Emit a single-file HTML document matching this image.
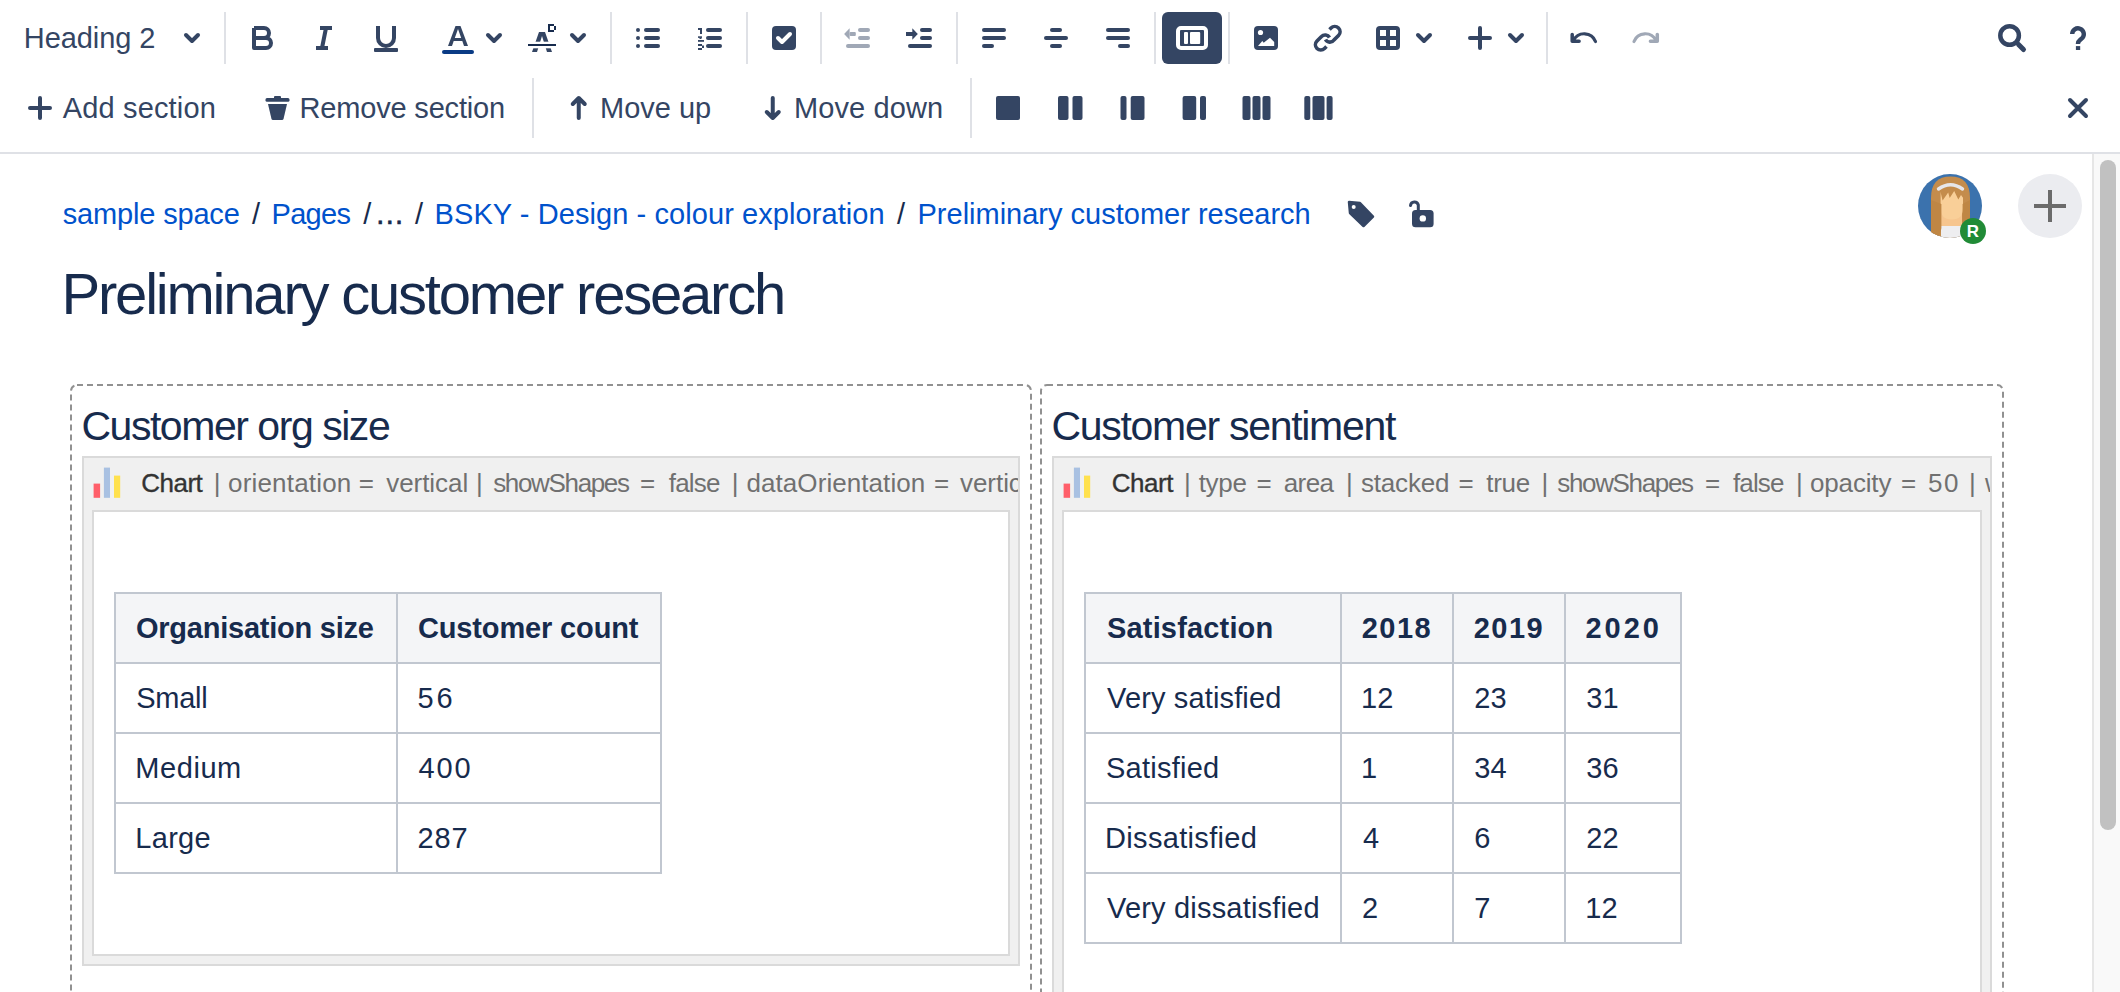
<!DOCTYPE html>
<html><head><meta charset="utf-8">
<style>
html,body{margin:0;padding:0;}
body{width:2120px;height:992px;overflow:hidden;background:#fff;position:relative;font-family:"Liberation Sans",sans-serif;}
.t{position:absolute;white-space:nowrap;line-height:0;}
.bx{position:absolute;}
svg{position:absolute;left:0;top:0;}
</style></head>
<body>
<svg width="2120" height="160" viewBox="0 0 2120 160">
  <!-- dividers -->
  <g fill="#DFE1E6">
    <rect x="224" y="12" width="2" height="52"/>
    <rect x="610" y="12" width="2" height="52"/>
    <rect x="746" y="12" width="2" height="52"/>
    <rect x="820" y="12" width="2" height="52"/>
    <rect x="956" y="12" width="2" height="52"/>
    <rect x="1154" y="12" width="2" height="52"/>
    <rect x="1228" y="12" width="2" height="52"/>
    <rect x="1546" y="12" width="2" height="52"/>
    <rect x="532" y="78" width="2" height="60"/>
    <rect x="970" y="78" width="2" height="60"/>
  </g>
  <rect x="0" y="152" width="2120" height="2" fill="#DFE1E6"/>
  <g stroke="#344563" fill="none" stroke-width="4" stroke-linecap="round" stroke-linejoin="round">
    <!-- chevrons -->
    <path d="M186,35 L192,41 L198,35"/>
    <path d="M488,35 L494,41 L500,35"/>
    <path d="M572,35 L578,41 L584,35"/>
    <path d="M1418,35 L1424,41 L1430,35"/>
    <path d="M1510,35 L1516,41 L1522,35"/>
    <!-- plus -->
    <path d="M1470,38 H1490 M1480,28 V48"/>
    <path d="M30,108 H50 M40,98 V118"/>
    <!-- arrows -->
    <path d="M572.75,104 L578.75,98 L584.75,104 M578.75,98 V118"/>
    <path d="M766.75,112 L772.75,118 L778.75,112 M772.75,118 V98"/>
    <!-- close -->
    <path d="M2070,100 L2086,116 M2086,100 L2070,116"/>
    <!-- B -->
    <path d="M254,28 V48 H266 A5,5 0 0 0 266,38 H254 M254,28 H264 A5,5 0 0 1 264,38" stroke-linecap="butt"/>
    <!-- I -->
    <path d="M320,28 H332 M316,48 H328 M326,28 L322,48" stroke-linecap="butt"/>
    <!-- U -->
    <path d="M378,26 V38 A8,8 0 0 0 394,38 V26" stroke-linecap="butt"/>
  </g>
  <rect x="374" y="48" width="24" height="4" rx="1" fill="#344563"/>
  <!-- A text colour -->
  <path d="M448,46 L455.5,26 H460.5 L468,46 H464 L462.3,41 H453.7 L452,46 Z M454.8,38 H461.2 L458,29 Z" fill="#344563" fill-rule="evenodd"/>
  <path d="M444,52 H472" stroke="#0A3B85" stroke-width="4" stroke-linecap="round"/>
  <!-- strike A -->
  <path d="M532,52 L539,32 H545 L552,52 H547 L542,36 L537,52 Z" fill="#344563"/>
  <rect x="529" y="41.7" width="26" height="6.6" fill="#fff"/>
  <rect x="528" y="44" width="28" height="2" fill="#172B4D"/>
  <path d="M548,24 H554 V26 H556 V30 H554 V32 H548 Z M550,26 V30 H554 V26 Z" fill="#172B4D" fill-rule="evenodd"/>
  <!-- bullet list -->
  <g fill="#344563">
    <circle cx="638" cy="30" r="2"/><circle cx="638" cy="38" r="2"/><circle cx="638" cy="46" r="2"/>
    <rect x="644" y="28" width="16" height="4" rx="2"/><rect x="644" y="36" width="16" height="4" rx="2"/><rect x="644" y="44" width="16" height="4" rx="2"/>
    <!-- numbered -->
    <rect x="706" y="28" width="16" height="4" rx="2"/><rect x="706" y="36" width="16" height="4" rx="2"/><rect x="706" y="44" width="16" height="4" rx="2"/>
    <rect x="698" y="28" width="3" height="2"/><rect x="700" y="28" width="2" height="6"/>
    <rect x="698" y="36.3" width="4" height="1.6"/><rect x="699.5" y="37.5" width="2" height="1.5"/><rect x="698" y="40" width="6" height="1.8"/>
    <rect x="698" y="44" width="4" height="2"/><rect x="702" y="45.5" width="2" height="2.5"/><rect x="698" y="48" width="4" height="2"/>
    <!-- checkbox -->
    <rect x="772" y="26" width="24" height="24" rx="4"/>
    <!-- indent -->
    <rect x="906" y="32" width="7" height="4"/>
    <path d="M912.3,28.3 L917.8,34 L912.3,39.7 Z"/>
    <rect x="920" y="28" width="12" height="4" rx="2"/><rect x="920" y="36" width="12" height="4" rx="2"/><rect x="908" y="44" width="24" height="4" rx="2"/>
    <!-- align -->
    <rect x="982" y="28" width="24" height="4" rx="2"/><rect x="982" y="36" width="24" height="4" rx="2"/><rect x="982" y="44" width="12" height="4" rx="2"/>
    <rect x="1050" y="28" width="12" height="4" rx="2"/><rect x="1044" y="36" width="24" height="4" rx="2"/><rect x="1050" y="44" width="12" height="4" rx="2"/>
    <rect x="1106" y="28" width="24" height="4" rx="2"/><rect x="1106" y="36" width="24" height="4" rx="2"/><rect x="1118" y="44" width="12" height="4" rx="2"/>
    <!-- active -->
    <rect x="1162" y="12" width="60" height="52" rx="6"/>
    <!-- image -->
    <rect x="1254" y="26" width="24" height="24" rx="4"/>
    <!-- table -->
    <rect x="1376" y="26" width="24" height="24" rx="4"/>
    <!-- trash -->
    <rect x="274" y="96" width="7" height="4" rx="1"/>
    <rect x="265.5" y="98" width="24" height="3.7" rx="1.5"/>
    <path d="M268,104 H287 L283.5,119 Q283.2,120 282,120 H273 Q271.8,120 271.5,119 Z"/>
    <!-- layouts -->
    <rect x="996" y="96" width="24" height="24" rx="2"/>
    <rect x="1058" y="96" width="10.5" height="24" rx="2"/><rect x="1072.5" y="96" width="10" height="24" rx="2"/>
    <rect x="1120.5" y="96" width="6" height="24" rx="2"/><rect x="1130.7" y="96" width="13.8" height="24" rx="2"/>
    <rect x="1182.6" y="96" width="13.6" height="24" rx="2"/><rect x="1200" y="96" width="6" height="24" rx="2"/>
    <rect x="1242.5" y="96" width="8" height="24" rx="2"/><rect x="1252.5" y="96" width="8" height="24" rx="2"/><rect x="1262.5" y="96" width="8" height="24" rx="2"/>
    <rect x="1304.3" y="96" width="6" height="24" rx="2"/><rect x="1312.5" y="96" width="12" height="24" rx="2"/><rect x="1326.6" y="96" width="6" height="24" rx="2"/>
  </g>
  <!-- outdent grey -->
  <g fill="#A0A8B6">
    <rect x="849.6" y="32" width="6.2" height="4" rx="1"/>
    <path d="M849.6,28.3 L844.1,34 L849.6,39.7 Z"/>
    <rect x="858" y="28" width="12" height="4" rx="2"/><rect x="858" y="36" width="12" height="4" rx="2"/><rect x="846" y="44" width="24" height="4" rx="2"/>
  </g>
  <!-- checkbox tick -->
  <path d="M778,38 L782,42 L790,34" stroke="#fff" stroke-width="4" fill="none" stroke-linecap="round" stroke-linejoin="round"/>
  <!-- active inner icon -->
  <rect x="1178" y="28" width="28" height="20" rx="3" fill="none" stroke="#fff" stroke-width="4"/>
  <rect x="1184" y="32" width="4" height="12" rx="1" fill="#fff"/>
  <rect x="1190" y="32" width="10.2" height="12" rx="1" fill="#fff"/>
  <!-- image inner -->
  <circle cx="1260.5" cy="32.5" r="2.6" fill="#fff"/>
  <path d="M1258,46.1 L1262.3,40.9 L1263.7,42.8 L1270,37.8 L1274.2,42 V46.1 Z" fill="#fff"/>
  <!-- table inner -->
  <g fill="#fff"><rect x="1380" y="30" width="6" height="6"/><rect x="1390" y="30" width="6" height="6"/><rect x="1380" y="40" width="6" height="6"/><rect x="1390" y="40" width="6" height="6"/></g>
  <!-- link -->
  <g stroke="#344563" stroke-width="3.6" fill="none" stroke-linecap="butt">
    <path d="M1326.5,46.5 L1324.5,48.5 A5,5 0 0 1 1317,41 L1321.5,36.5 A5,5 0 0 1 1329.5,37.5"/>
    <path d="M1329.5,29.5 L1331,28 A5,5 0 0 1 1338.5,35.5 L1334,40 A5,5 0 0 1 1325.5,39.5"/>
  </g>
  <!-- undo / redo -->
  <path d="M1572.2,34.6 V41.3 H1579.1" stroke="#344563" stroke-width="3.5" fill="none" stroke-linecap="round" stroke-linejoin="round"/>
  <path d="M1573.5,40.5 A12,12 0 0 1 1595.5,41.5" stroke="#344563" stroke-width="3.2" fill="none" stroke-linecap="round"/>
  <g transform="translate(3229.5,0) scale(-1,1)">
    <path d="M1572.2,34.6 V41.3 H1579.1" stroke="#A0A8B6" stroke-width="3.5" fill="none" stroke-linecap="round" stroke-linejoin="round"/>
    <path d="M1573.5,40.5 A12,12 0 0 1 1595.5,41.5" stroke="#A0A8B6" stroke-width="3.2" fill="none" stroke-linecap="round"/>
  </g>
  <!-- search -->
  <circle cx="2009.6" cy="35.5" r="9.3" stroke="#344563" stroke-width="4.5" fill="none"/>
  <path d="M2018.5,44.5 L2023.5,49.5" stroke="#344563" stroke-width="5" stroke-linecap="round"/>
  <!-- help -->
  <path d="M2072.2,34 A5.8,5.8 0 1 1 2082.5,37.8 L2080,40 Q2078,41.6 2078,43.5 V44" stroke="#344563" stroke-width="4.4" fill="none"/>
  <rect x="2075.9" y="46.1" width="4.3" height="3.9" fill="#344563"/>
</svg>

<div class="bx" style="left:2092px;top:154px;width:28px;height:838px;background:#F9F9F9;border-left:2px solid #E6E6E6;box-sizing:border-box;"></div>
<div class="bx" style="left:2100px;top:160px;width:16px;height:670px;background:#C1C1C1;border-radius:8px;"></div>
<svg width="2120" height="260" viewBox="0 0 2120 260" style="top:0">
  <path d="M1349,202 L1360,203 L1373,216.5 L1363.5,226 L1350,213 Z" fill="#344563" stroke="#344563" stroke-width="2.5" stroke-linejoin="round"/>
  <circle cx="1353.7" cy="207" r="2" fill="#fff"/>
  <rect x="1412" y="210" width="21.6" height="17.3" rx="3.5" fill="#344563"/>
  <circle cx="1422.8" cy="218.4" r="3.2" fill="#fff"/>
  <path d="M1410.5,205.5 A4,4 0 0 1 1418.3,205 V211" stroke="#344563" stroke-width="3" fill="none" stroke-linecap="round"/>
  <!-- add circle -->
  <circle cx="2050" cy="206" r="32" fill="#EBECF0"/>
  <rect x="2048" y="190" width="4" height="32" fill="#6B6B6B"/>
  <rect x="2034" y="204" width="32" height="4" fill="#6B6B6B"/>
  <!-- avatar -->
  <defs><clipPath id="av"><circle cx="1950" cy="206" r="32"/></clipPath></defs>
  <circle cx="1950" cy="206" r="32" fill="#3B72AD"/>
  <g clip-path="url(#av)">
    <path d="M1931,240 V198 Q1931,176.5 1950.5,176.5 Q1970,176.5 1970,198 V240 Z" fill="#C48C4C"/>
    <rect x="1941" y="224" width="20" height="20" fill="#EEEEF0"/>
    <rect x="1941" y="212" width="21" height="14" fill="#F6C58E"/>
    <path d="M1940.6,190 H1963 V208 Q1963,219.5 1951.8,219.5 Q1940.6,219.5 1940.6,208 Z" fill="#F9CF98"/>
    <path d="M1938,187 L1941,194 L1942.6,200.5 L1948.2,192.5 L1949.7,198 L1954.2,191 L1958.3,199.5 L1961,195 L1963.2,198 L1966,187 Z" fill="#C48C4C"/>
    <path d="M1931,200 L1941.4,204 L1941.4,225 Q1942,232 1938,236 L1931,236 Z" fill="#BF8644"/>
    <path d="M1970,200 L1962.6,204 L1962.6,225 Q1963,230 1966,233 L1970,233 Z" fill="#BF8644"/>
    <path d="M1938.5,189 Q1950.5,180.5 1962.5,189" stroke="#E6E6EA" stroke-width="3.4" fill="none" stroke-linecap="round"/>
  </g>
  <circle cx="1973" cy="231" r="13" fill="#218B37"/>
</svg>

<div class="t" style="left:1963px;top:232px;width:20px;text-align:center;color:#fff;font-size:17px;font-weight:bold;">R</div>
<svg width="2120" height="992" viewBox="0 0 2120 992" style="top:0">
  <rect x="71" y="385" width="960" height="700" rx="6" fill="none" stroke="#919191" stroke-width="2" stroke-dasharray="6 4"/>
  <rect x="1041" y="385" width="962" height="700" rx="6" fill="none" stroke="#919191" stroke-width="2" stroke-dasharray="6 4"/>
</svg>
<div class="bx" style="left:82px;top:456px;width:938px;height:510px;background:#F0F0F0;border:2px solid #DADADA;box-sizing:border-box;"></div>
<div class="bx" style="left:92px;top:510px;width:918px;height:446px;background:#fff;border:2px solid #DADADA;box-sizing:border-box;"></div>
<div class="bx" style="left:1052px;top:456px;width:940px;height:600px;background:#F0F0F0;border:2px solid #DADADA;box-sizing:border-box;"></div>
<div class="bx" style="left:1062px;top:510px;width:920px;height:600px;background:#fff;border:2px solid #DADADA;box-sizing:border-box;"></div>
<svg width="40" height="40" style="left:91px;top:465px;"><rect x="2.6" y="18.6" width="6.5" height="14.2" fill="#FF5F6A"/><rect x="12.9" y="2.6" width="6.1" height="30.2" fill="#A9C1E2"/><rect x="23" y="10.6" width="6.2" height="22.2" fill="#FFE14E"/></svg>
<svg width="40" height="40" style="left:1061px;top:465px;"><rect x="2.6" y="18.6" width="6.5" height="14.2" fill="#FF5F6A"/><rect x="12.9" y="2.6" width="6.1" height="30.2" fill="#A9C1E2"/><rect x="23" y="10.6" width="6.2" height="22.2" fill="#FFE14E"/></svg>
<div class="bx" style="left:84px;top:458px;width:934px;height:52px;overflow:hidden;">
<div class="t" style="left:57.30px;top:25px;font-size:26px;color:#333333;letter-spacing:-0.514px;-webkit-text-stroke:0.35px #333;">Chart</div>
<div class="t" style="left:129.80px;top:25px;font-size:26px;color:#707070;">|</div>
<div class="t" style="left:144.00px;top:25px;font-size:26px;color:#707070;letter-spacing:0.184px;">orientation</div>
<div class="t" style="left:274.80px;top:25px;font-size:26px;color:#707070;">=</div>
<div class="t" style="left:302.20px;top:25px;font-size:26px;color:#707070;letter-spacing:-0.054px;">vertical</div>
<div class="t" style="left:392.00px;top:25px;font-size:26px;color:#707070;">|</div>
<div class="t" style="left:409.20px;top:25px;font-size:26px;color:#707070;letter-spacing:-1.342px;">showShapes</div>
<div class="t" style="left:556.00px;top:25px;font-size:26px;color:#707070;">=</div>
<div class="t" style="left:584.75px;top:25px;font-size:26px;color:#707070;letter-spacing:-0.802px;">false</div>
<div class="t" style="left:647.75px;top:25px;font-size:26px;color:#707070;">|</div>
<div class="t" style="left:662.50px;top:25px;font-size:26px;color:#707070;letter-spacing:0.066px;">dataOrientation</div>
<div class="t" style="left:850.00px;top:25px;font-size:26px;color:#707070;">=</div>
<div class="t" style="left:876.00px;top:25px;font-size:26px;color:#707070;letter-spacing:-0.054px;">vertical</div>
</div>
<div class="bx" style="left:1054px;top:458px;width:936px;height:52px;overflow:hidden;">
<div class="t" style="left:57.70px;top:25px;font-size:26px;color:#333333;letter-spacing:-0.439px;-webkit-text-stroke:0.35px #333;">Chart</div>
<div class="t" style="left:130.00px;top:25px;font-size:26px;color:#707070;">|</div>
<div class="t" style="left:144.70px;top:25px;font-size:26px;color:#707070;letter-spacing:-0.295px;">type</div>
<div class="t" style="left:202.50px;top:25px;font-size:26px;color:#707070;">=</div>
<div class="t" style="left:229.70px;top:25px;font-size:26px;color:#707070;letter-spacing:-0.559px;">area</div>
<div class="t" style="left:292.00px;top:25px;font-size:26px;color:#707070;">|</div>
<div class="t" style="left:307.00px;top:25px;font-size:26px;color:#707070;letter-spacing:-0.191px;">stacked</div>
<div class="t" style="left:404.40px;top:25px;font-size:26px;color:#707070;">=</div>
<div class="t" style="left:432.30px;top:25px;font-size:26px;color:#707070;letter-spacing:-0.281px;">true</div>
<div class="t" style="left:487.60px;top:25px;font-size:26px;color:#707070;">|</div>
<div class="t" style="left:503.30px;top:25px;font-size:26px;color:#707070;letter-spacing:-1.353px;">showShapes</div>
<div class="t" style="left:650.90px;top:25px;font-size:26px;color:#707070;">=</div>
<div class="t" style="left:679.00px;top:25px;font-size:26px;color:#707070;letter-spacing:-0.865px;">false</div>
<div class="t" style="left:742.00px;top:25px;font-size:26px;color:#707070;">|</div>
<div class="t" style="left:756.00px;top:25px;font-size:26px;color:#707070;letter-spacing:-0.163px;">opacity</div>
<div class="t" style="left:846.90px;top:25px;font-size:26px;color:#707070;">=</div>
<div class="t" style="left:874.00px;top:25px;font-size:26px;color:#707070;letter-spacing:1.540px;">50</div>
<div class="t" style="left:915.00px;top:25px;font-size:26px;color:#707070;">|</div>
<div class="t" style="left:931.00px;top:25px;font-size:26px;color:#707070;">width</div>
</div>
<div class="bx" style="left:116px;top:594px;width:544px;height:68px;background:#F4F5F7"></div><div class="bx" style="left:114px;top:592px;width:548px;height:2px;background:#C1C7D0"></div><div class="bx" style="left:114px;top:662px;width:548px;height:2px;background:#C1C7D0"></div><div class="bx" style="left:114px;top:732px;width:548px;height:2px;background:#C1C7D0"></div><div class="bx" style="left:114px;top:802px;width:548px;height:2px;background:#C1C7D0"></div><div class="bx" style="left:114px;top:872px;width:548px;height:2px;background:#C1C7D0"></div><div class="bx" style="left:114px;top:592px;width:2px;height:282px;background:#C1C7D0"></div><div class="bx" style="left:396px;top:592px;width:2px;height:282px;background:#C1C7D0"></div><div class="bx" style="left:660px;top:592px;width:2px;height:282px;background:#C1C7D0"></div><div class="bx" style="left:1086px;top:594px;width:594px;height:68px;background:#F4F5F7"></div><div class="bx" style="left:1084px;top:592px;width:598px;height:2px;background:#C1C7D0"></div><div class="bx" style="left:1084px;top:662px;width:598px;height:2px;background:#C1C7D0"></div><div class="bx" style="left:1084px;top:732px;width:598px;height:2px;background:#C1C7D0"></div><div class="bx" style="left:1084px;top:802px;width:598px;height:2px;background:#C1C7D0"></div><div class="bx" style="left:1084px;top:872px;width:598px;height:2px;background:#C1C7D0"></div><div class="bx" style="left:1084px;top:942px;width:598px;height:2px;background:#C1C7D0"></div><div class="bx" style="left:1084px;top:592px;width:2px;height:352px;background:#C1C7D0"></div><div class="bx" style="left:1340px;top:592px;width:2px;height:352px;background:#C1C7D0"></div><div class="bx" style="left:1452px;top:592px;width:2px;height:352px;background:#C1C7D0"></div><div class="bx" style="left:1564px;top:592px;width:2px;height:352px;background:#C1C7D0"></div><div class="bx" style="left:1680px;top:592px;width:2px;height:352px;background:#C1C7D0"></div>
<div class="t" style="left:23.80px;top:38px;font-size:29px;color:#344563;letter-spacing:-0.086px;">Heading 2</div>
<div class="t" style="left:62.80px;top:108px;font-size:29px;color:#344563;letter-spacing:0.149px;">Add section</div>
<div class="t" style="left:299.50px;top:108px;font-size:29px;color:#344563;letter-spacing:-0.177px;">Remove section</div>
<div class="t" style="left:600.00px;top:108px;font-size:29px;color:#344563;letter-spacing:-0.017px;">Move up</div>
<div class="t" style="left:794.00px;top:108px;font-size:29px;color:#344563;letter-spacing:0.104px;">Move down</div>
<div class="t" style="left:62.80px;top:214px;font-size:29px;color:#0052CC;letter-spacing:-0.173px;">sample space</div>
<div class="t" style="left:251.90px;top:214px;font-size:29px;color:#172B4D;">/</div>
<div class="t" style="left:271.60px;top:214px;font-size:29px;color:#0052CC;letter-spacing:-0.732px;">Pages</div>
<div class="t" style="left:363.20px;top:214px;font-size:29px;color:#172B4D;">/</div>
<div class="t" style="left:376.30px;top:214px;font-size:29px;color:#172B4D;letter-spacing:1.293px;-webkit-text-stroke:0.6px #172B4D;">...</div>
<div class="t" style="left:415.00px;top:214px;font-size:29px;color:#172B4D;">/</div>
<div class="t" style="left:434.60px;top:214px;font-size:29px;color:#0052CC;letter-spacing:0.074px;">BSKY - Design - colour exploration</div>
<div class="t" style="left:897.00px;top:214px;font-size:29px;color:#172B4D;">/</div>
<div class="t" style="left:917.50px;top:214px;font-size:29px;color:#0052CC;">Preliminary customer research</div>
<div class="t" style="left:61.50px;top:294px;font-size:58px;color:#172B4D;letter-spacing:-2.204px;">Preliminary customer research</div>
<div class="t" style="left:81.40px;top:426px;font-size:41px;color:#172B4D;letter-spacing:-1.460px;">Customer org size</div>
<div class="t" style="left:1051.40px;top:426px;font-size:41px;color:#172B4D;letter-spacing:-1.286px;">Customer sentiment</div>
<div class="t" style="left:136.00px;top:628px;font-size:29px;font-weight:bold;color:#172B4D;letter-spacing:-0.244px;">Organisation size</div>
<div class="t" style="left:418.00px;top:628px;font-size:29px;font-weight:bold;color:#172B4D;letter-spacing:-0.145px;">Customer count</div>
<div class="t" style="left:136.30px;top:698px;font-size:29px;color:#172B4D;letter-spacing:-0.293px;">Small</div>
<div class="t" style="left:417.50px;top:698px;font-size:29px;color:#172B4D;letter-spacing:2.872px;">56</div>
<div class="t" style="left:135.30px;top:768px;font-size:29px;color:#172B4D;letter-spacing:0.563px;">Medium</div>
<div class="t" style="left:418.50px;top:768px;font-size:29px;color:#172B4D;letter-spacing:1.822px;">400</div>
<div class="t" style="left:135.30px;top:838px;font-size:29px;color:#172B4D;letter-spacing:0.289px;">Large</div>
<div class="t" style="left:417.50px;top:838px;font-size:29px;color:#172B4D;letter-spacing:0.922px;">287</div>
<div class="t" style="left:1107.00px;top:628px;font-size:29px;font-weight:bold;color:#172B4D;letter-spacing:0.168px;">Satisfaction</div>
<div class="t" style="left:1361.70px;top:628px;font-size:29px;font-weight:bold;color:#172B4D;letter-spacing:1.472px;">2018</div>
<div class="t" style="left:1473.70px;top:628px;font-size:29px;font-weight:bold;color:#172B4D;letter-spacing:1.472px;">2019</div>
<div class="t" style="left:1585.50px;top:628px;font-size:29px;font-weight:bold;color:#172B4D;letter-spacing:2.972px;">2020</div>
<div class="t" style="left:1107.00px;top:698px;font-size:29px;color:#172B4D;letter-spacing:0.143px;">Very satisfied</div>
<div class="t" style="left:1361.00px;top:698px;font-size:29px;color:#172B4D;">12</div>
<div class="t" style="left:1474.30px;top:698px;font-size:29px;color:#172B4D;">23</div>
<div class="t" style="left:1586.30px;top:698px;font-size:29px;color:#172B4D;">31</div>
<div class="t" style="left:1106.00px;top:768px;font-size:29px;color:#172B4D;letter-spacing:0.250px;">Satisfied</div>
<div class="t" style="left:1361.00px;top:768px;font-size:29px;color:#172B4D;">1</div>
<div class="t" style="left:1474.30px;top:768px;font-size:29px;color:#172B4D;">34</div>
<div class="t" style="left:1586.30px;top:768px;font-size:29px;color:#172B4D;">36</div>
<div class="t" style="left:1105.00px;top:838px;font-size:29px;color:#172B4D;letter-spacing:0.332px;">Dissatisfied</div>
<div class="t" style="left:1363.00px;top:838px;font-size:29px;color:#172B4D;">4</div>
<div class="t" style="left:1474.30px;top:838px;font-size:29px;color:#172B4D;">6</div>
<div class="t" style="left:1586.30px;top:838px;font-size:29px;color:#172B4D;">22</div>
<div class="t" style="left:1107.00px;top:908px;font-size:29px;color:#172B4D;letter-spacing:0.187px;">Very dissatisfied</div>
<div class="t" style="left:1362.00px;top:908px;font-size:29px;color:#172B4D;">2</div>
<div class="t" style="left:1474.30px;top:908px;font-size:29px;color:#172B4D;">7</div>
<div class="t" style="left:1585.30px;top:908px;font-size:29px;color:#172B4D;">12</div>
</body></html>
